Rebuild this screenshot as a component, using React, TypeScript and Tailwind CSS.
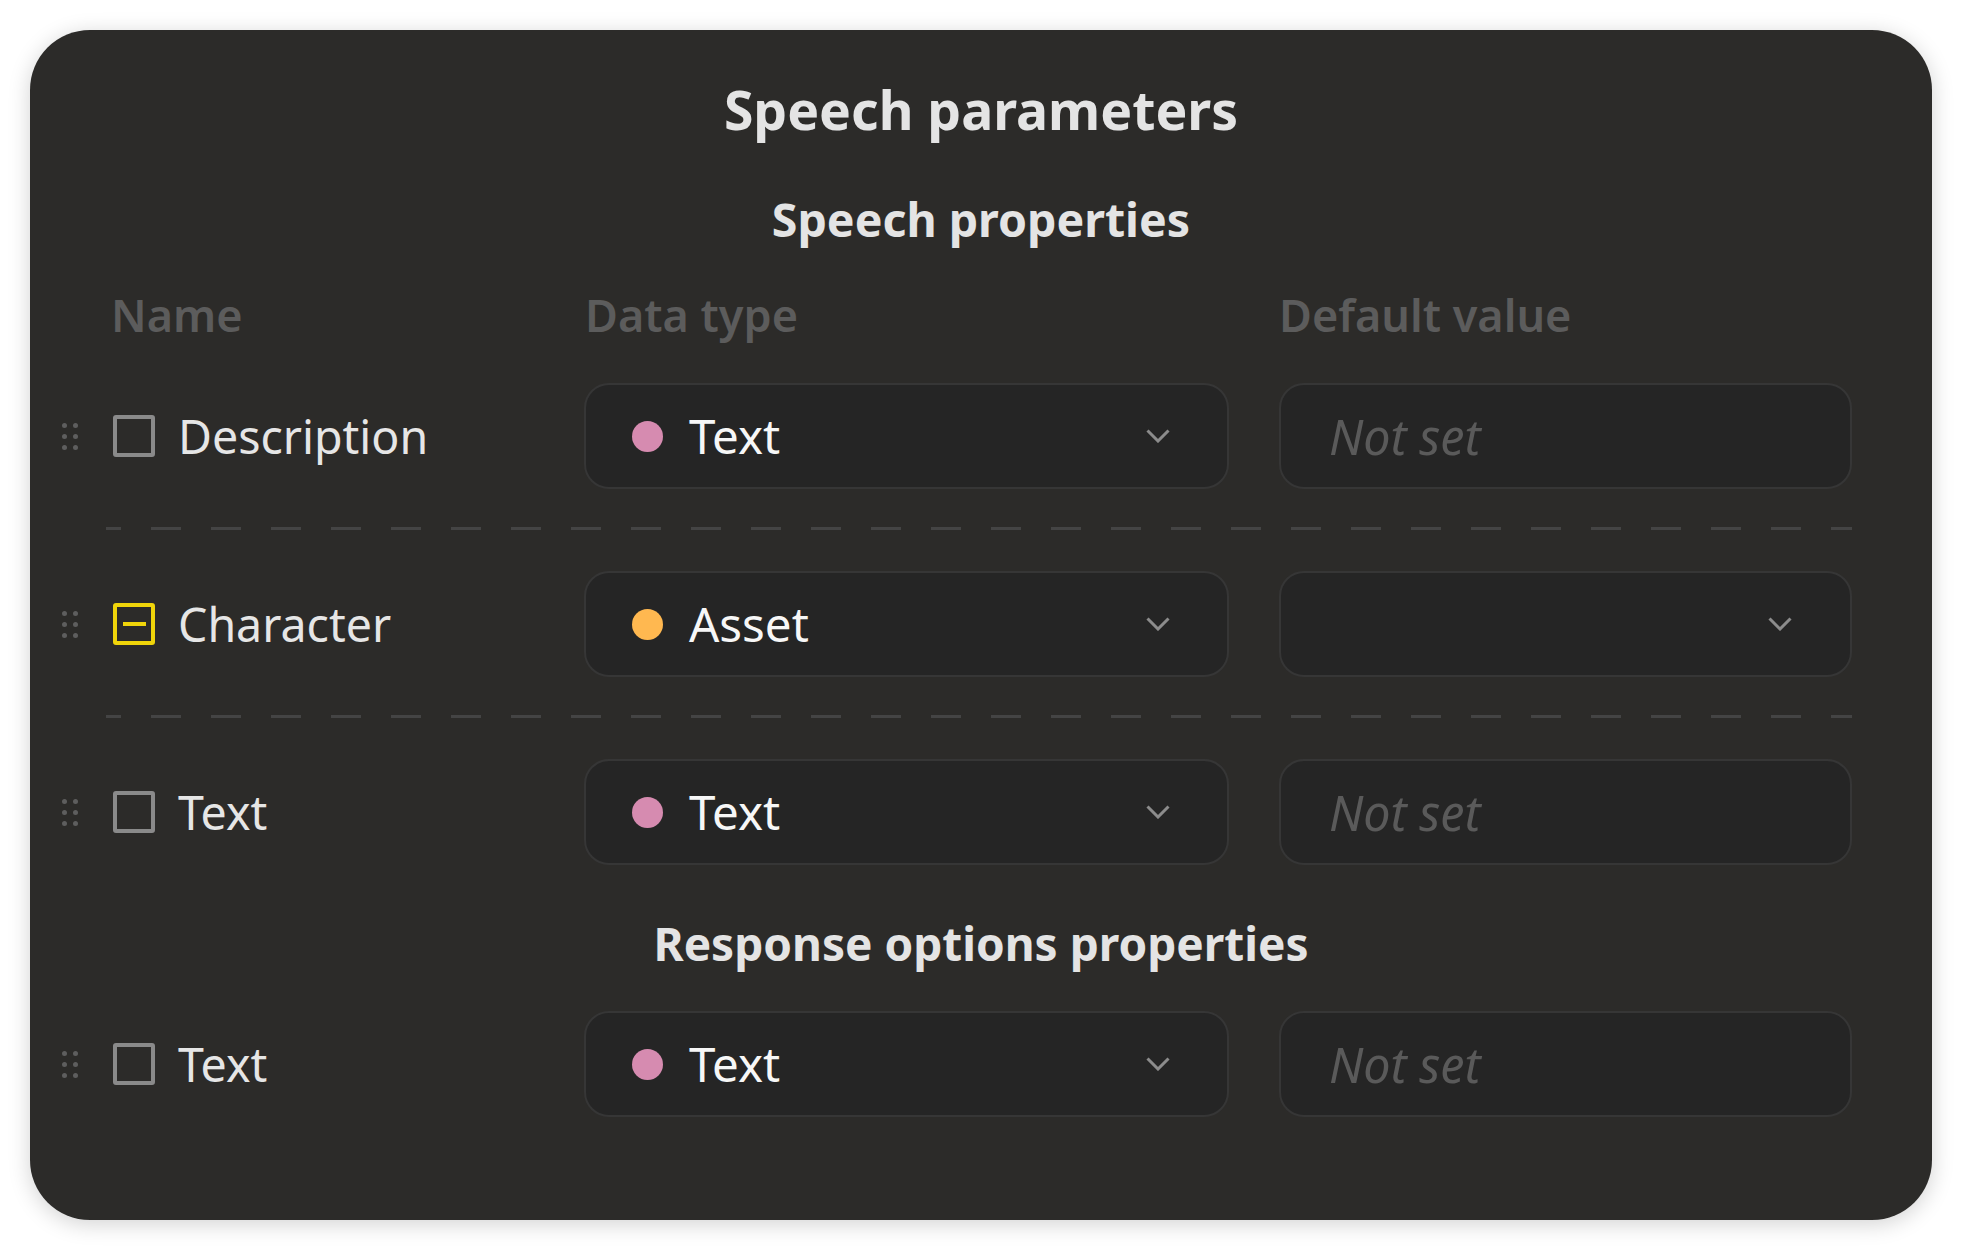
import React from "react";

const FONT = { fontFamily: '"Noto Sans", "Open Sans", sans-serif' };

function DragHandle() {
  return (
    <div className="grid grid-cols-2 gap-x-[6px] gap-y-[6px] w-[16px] shrink-0">
      {[0, 1, 2, 3, 4, 5].map((i) => (
        <span key={i} className="block w-[5px] h-[5px] rounded-full bg-[#5e5e5e]" />
      ))}
    </div>
  );
}

function Checkbox({ indeterminate }: { indeterminate?: boolean }) {
  if (indeterminate) {
    return (
      <div className="w-[42px] h-[42px] shrink-0 rounded-[3px] border-[4px] border-[#f0d50a] flex items-center justify-center">
        <span className="block w-[23px] h-[4px] bg-[#f0d50a]" />
      </div>
    );
  }
  return <div className="w-[42px] h-[42px] shrink-0 rounded-[3px] border-[4px] border-[#8a8a8a]" />;
}

function Chevron() {
  return (
    <svg width="24" height="14" viewBox="0 0 24 14" className="shrink-0">
      <polyline points="1.5,1.5 12,12 22.5,1.5" fill="none" stroke="#8c8c8c" strokeWidth="3" />
    </svg>
  );
}

function Divider() {
  return (
    <div className="ml-[44px] mt-[38px] mb-[41px] h-[3px] bg-[repeating-linear-gradient(90deg,#444444_0_15px,transparent_15px_45px,#444444_45px_60px)]" />
  );
}

type RowProps = {
  name: string;
  type: string;
  dot: string;
  indeterminate?: boolean;
  select?: boolean;
};

function Row({ name, type, dot, indeterminate, select }: RowProps) {
  return (
    <div className="flex items-center h-[106px]">
      <div className="w-[522px] shrink-0 flex items-center">
        <DragHandle />
        <div className="ml-[35px]">
          <Checkbox indeterminate={indeterminate} />
        </div>
        <span className="ml-[23px] text-[46.5px] leading-[56px] text-[#e6e6e6]">{name}</span>
      </div>
      <div className="w-[645px] h-[106px] shrink-0 rounded-[25px] border-2 border-[#363636] bg-[#252525] flex items-center pl-[46px] pr-[57px]">
        <span className="w-[31px] h-[31px] rounded-full shrink-0" style={{ backgroundColor: dot }} />
        <span className="ml-[26px] text-[47.5px] leading-[56px] text-[#f7f7f7] flex-1">{type}</span>
        <Chevron />
      </div>
      <div className="ml-[50px] flex-1 h-[106px] rounded-[25px] border-2 border-[#363636] bg-[#252525] flex items-center pl-[48px] pr-[58px]">
        {select ? (
          <>
            <span className="flex-1" />
            <Chevron />
          </>
        ) : (
          <span className="text-[48.5px] leading-[56px] italic text-[#5a5a5a]">Not set</span>
        )}
      </div>
    </div>
  );
}

export default function App() {
  return (
    <div className="min-h-screen bg-white p-[30px]" style={FONT}>
      <div className="h-[1190px] rounded-[60px] bg-[#2c2b29] shadow-[0_4px_22px_rgba(0,0,0,0.18)] pt-[48px] pl-[32px] pr-[80px]">
        <h1 className="text-center text-[53.5px] leading-[64px] font-bold text-[#e4e4e4] pl-[48px]">Speech parameters</h1>
        <h2 className="mt-[49px] text-center text-[46.5px] leading-[56px] font-bold text-[#e4e4e4] pl-[48px]">Speech properties</h2>
        <div className="mt-[41px] flex text-[45px] leading-[54px] font-semibold text-[#5c5c5c]">
          <div className="w-[522px] pl-[49px] shrink-0">Name</div>
          <div className="w-[645px] pl-[1px] shrink-0">Data type</div>
          <div className="ml-[50px]">Default value</div>
        </div>
        <div className="mt-[41px]">
          <Row name="Description" type="Text" dot="#d68bb0" />
          <Divider />
          <Row name="Character" type="Asset" dot="#ffb850" indeterminate select />
          <Divider />
          <Row name="Text" type="Text" dot="#d68bb0" />
        </div>
        <h2 className="mt-[50px] text-center text-[46px] leading-[56px] font-bold text-[#e4e4e4] pl-[48px]">Response options properties</h2>
        <div className="mt-[40px]">
          <Row name="Text" type="Text" dot="#d68bb0" />
        </div>
      </div>
    </div>
  );
}
